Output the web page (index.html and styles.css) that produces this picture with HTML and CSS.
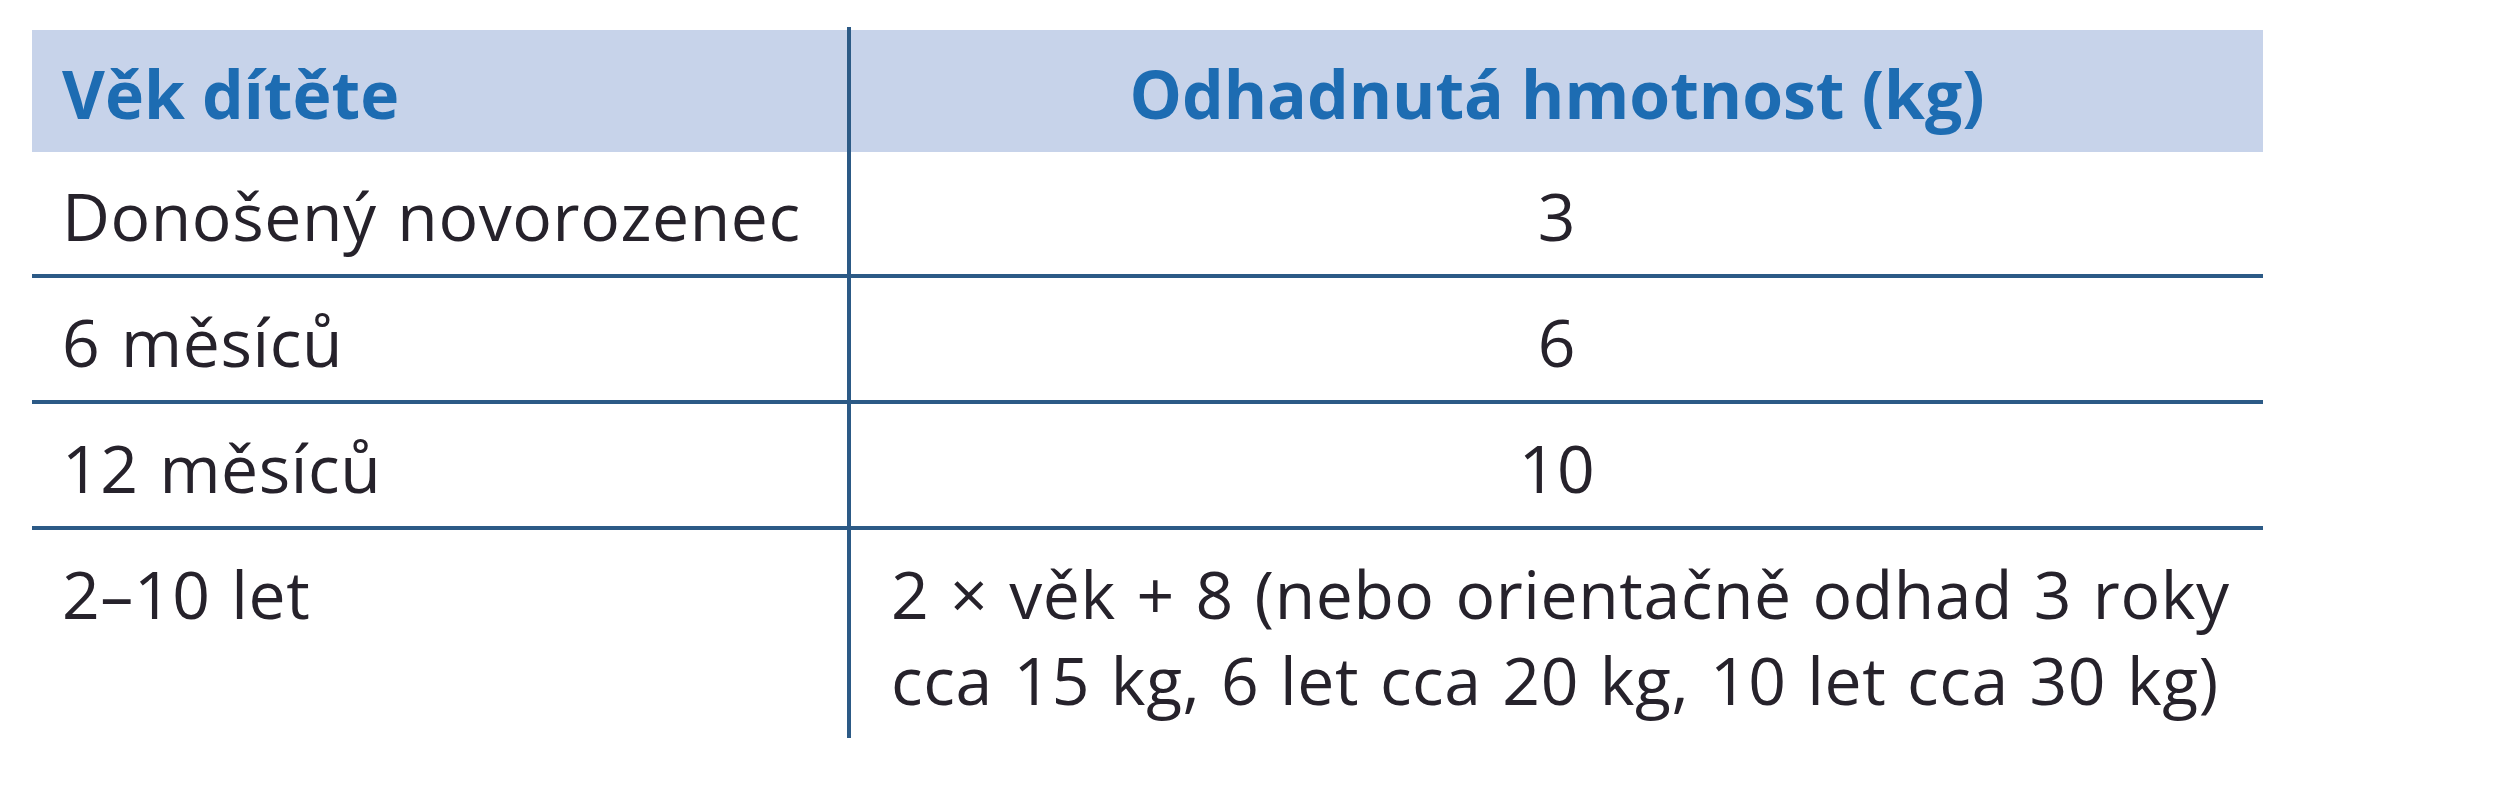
FILE: index.html
```html
<!DOCTYPE html>
<html lang="cs">
<head>
<meta charset="utf-8">
<title>Odhad hmotnosti dítěte</title>
<link rel="stylesheet" href="styles.css">
</head>
<body>
<div class="page">
  <table class="weights">
    <thead>
      <tr>
        <th class="age">Věk dítěte</th>
        <th class="mass">Odhadnutá hmotnost (kg)</th>
      </tr>
    </thead>
    <tbody>
      <tr>
        <td class="age">Donošený novorozenec</td>
        <td class="mass">3</td>
      </tr>
      <tr>
        <td class="age">6 měsíců</td>
        <td class="mass">6</td>
      </tr>
      <tr>
        <td class="age">12 měsíců</td>
        <td class="mass">10</td>
      </tr>
      <tr>
        <td class="age">2–10 let</td>
        <td class="mass formula">2 × věk + 8 (nebo orientačně odhad 3 roky<br>cca 15 kg, 6 let cca 20 kg, 10 let cca 30 kg)</td>
      </tr>
    </tbody>
  </table>
</div>
</body>
</html>
```
FILE: styles.css
```css
html, body {
  margin: 0;
  padding: 0;
  background: #ffffff;
}

.page {
  padding: 27px 0 0 32px;
}

.weights {
  border-collapse: collapse;
  border-spacing: 0;
  width: 2231px;
  table-layout: fixed;
  font-family: "Open Sans", "Noto Sans", sans-serif;
  font-size: 66px;
  line-height: 86px;
  color: #26222b;
}

.weights th,
.weights td {
  padding: 20px 0 16px 0;
  vertical-align: top;
}

.weights td {
  letter-spacing: 0.6px;
  word-spacing: 3px;
}

.weights th {
  padding-top: 23px;
  padding-bottom: 16px;
  font-weight: 700;
  color: #1d6cb2;
  background: linear-gradient(to bottom, transparent 3px, #c7d3ea 3px);
}

.weights tbody tr:not(:last-child) td {
  border-bottom: 4px solid #2c5a86;
}

.weights .age {
  width: 785px;
  padding-left: 30px;
  text-align: left;
  border-right: 4px solid #2c5a86;
}

.weights .mass {
  text-align: center;
}

.weights .formula {
  text-align: left;
  padding-left: 40px;
}
```
